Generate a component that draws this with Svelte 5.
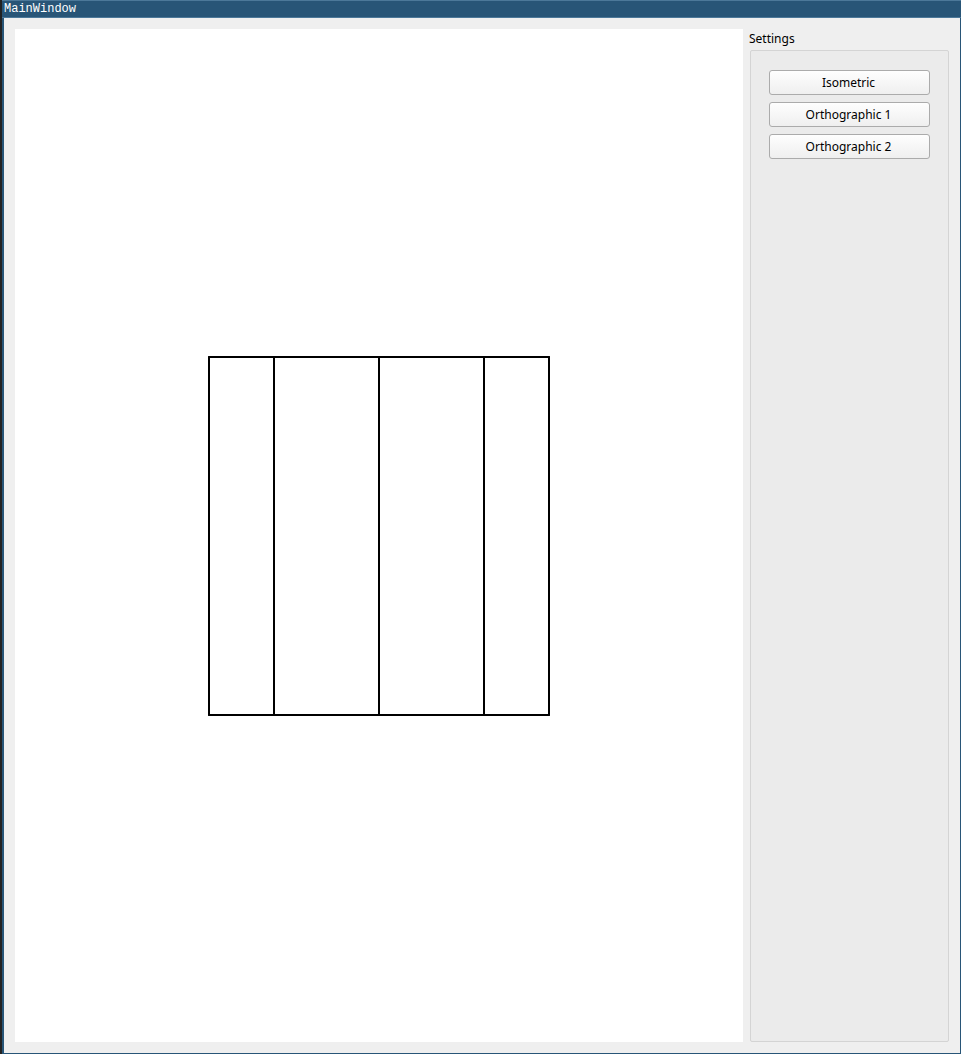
<script>
  const views = ['Isometric', 'Orthographic 1', 'Orthographic 2'];
  let current = $state('Orthographic 2');
  const edges = [1, 66, 171, 276, 341];
</script>

<div class="desktop">
  <div class="window">
    <header>MainWindow</header>
    <div class="content">
      <main>
        <svg width="342" height="360" viewBox="0 0 342 360" role="img" aria-label={current}>
          <path d="M1 1H341M1 359H341" />
          {#each edges as x}
            <path d="M{x} 1V359" />
          {/each}
        </svg>
      </main>
      <aside>
        <h2 id="settings">Settings</h2>
        <div class="group" role="group" aria-labelledby="settings">
          {#each views as view}
            <button type="button" onclick={() => (current = view)}>{view}</button>
          {/each}
        </div>
      </aside>
    </div>
  </div>
</div>

<style>
  .desktop {
    box-sizing: border-box;
    min-height: 100vh;
    display: flex;
    padding-left: 2px;
    background: #222222;
    color: #000;
    font: 12px/20px "Noto Sans", sans-serif;
  }

  .window {
    flex: 1;
    display: flex;
    flex-direction: column;
    border: solid #285577;
    border-width: 0 1px 1px 2px;
    background: #efefef;
  }

  header {
    box-sizing: border-box;
    height: 18px;
    margin: 0 -1px 0 -2px;
    padding-left: 2px;
    border: solid #4c7899;
    border-width: 1px 0;
    background: #285577;
    color: #fff;
    font: 12px/16px "Liberation Mono", monospace;
  }

  .content {
    flex: 1;
    display: flex;
    gap: 6px;
    padding: 11px;
  }

  main {
    flex: 1;
    display: flex;
    align-items: center;
    justify-content: center;
    background: #fff;
  }

  svg path {
    fill: none;
    stroke: #000;
    stroke-width: 2;
    stroke-linecap: round;
  }

  aside {
    width: 200px;
    display: flex;
    flex-direction: column;
  }

  h2 {
    margin: 0 0 1px;
    font: inherit;
  }

  .group {
    flex: 1;
    display: flex;
    flex-direction: column;
    gap: 7px;
    margin-left: 1px;
    padding: 19px 18px;
    border: 1px solid #d4d4d4;
    border-radius: 2px;
    background: #ebebeb;
  }

  button {
    height: 25px;
    padding: 0 2px 0 0;
    border: 1px solid #ababab;
    border-radius: 3px;
    background: linear-gradient(#fefefe, #efefef);
    color: #000;
    font: inherit;
  }

  button:active {
    background: #dedede;
  }
</style>
